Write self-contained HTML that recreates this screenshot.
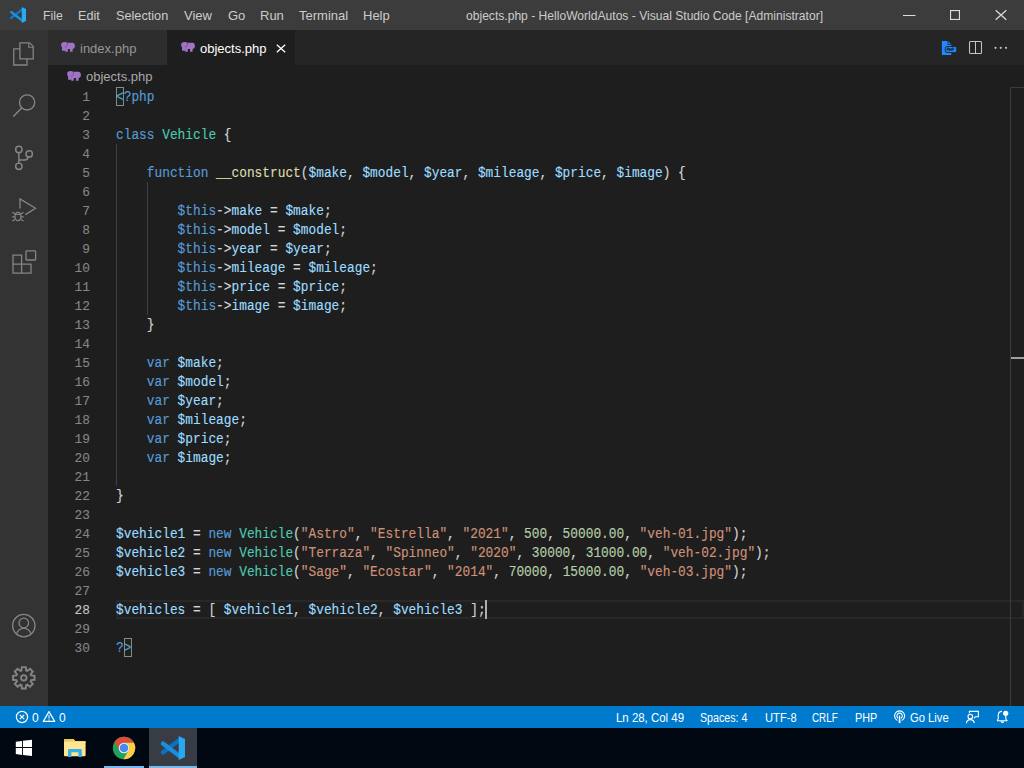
<!DOCTYPE html>
<html><head><meta charset="utf-8"><style>
*{margin:0;padding:0;box-sizing:border-box}
html,body{width:1024px;height:768px;overflow:hidden;background:#1e1e1e;font-family:"Liberation Sans",sans-serif}
.a{position:absolute;white-space:nowrap}
#title{position:absolute;left:0;top:0;width:1024px;height:30px;background:#3c3c3c}
.mi{position:absolute;top:8px;font-size:13px;line-height:15px;color:#cccccc;transform-origin:0 0}
#activity{position:absolute;left:0;top:30px;width:48px;height:676px;background:#333333}
#tabs{position:absolute;left:48px;top:30px;width:976px;height:35px;background:#252526}
.tab{position:absolute;top:0;height:35px}
#editor{position:absolute;left:48px;top:65px;width:976px;height:641px;background:#1e1e1e}
.ln{position:absolute;left:48px;width:42px;text-align:right;height:19px;line-height:20px;font-family:"Liberation Mono",monospace;font-size:13px;transform:scaleX(0.987);transform-origin:100% 0;-webkit-text-stroke:0.1px currentColor}
.cl{-webkit-text-stroke:0.15px currentColor;position:absolute;left:116px;height:19px;line-height:19px;font-family:"Liberation Mono",monospace;font-size:14px;transform:scaleX(0.91631);transform-origin:0 0;color:#d4d4d4;white-space:pre}
#status{position:absolute;left:0;top:706px;width:1024px;height:22px;background:#007acc}
.st{position:absolute;top:711px;font-size:12px;line-height:14px;color:#ffffff;transform-origin:0 0}
#taskbar{position:absolute;left:0;top:728px;width:1024px;height:40px;background:#020812}
svg{position:absolute;overflow:visible}
.tt{position:absolute;top:41px;font-size:13px;line-height:15px;transform-origin:0 0}
.bc{position:absolute;top:69px;font-size:13px;line-height:15px;color:#a9a9a9;transform-origin:0 0}

</style></head><body>
<div id="title">
  <svg style="left:10px;top:7px" width="16" height="16" viewBox="0 0 16 16">
      <path d="M1.2 11.0 L12.5 2.3" stroke="#0e78c8" stroke-width="2.4" stroke-linecap="round"/>
      <path d="M1.2 5.0 L12.5 13.7" stroke="#1c90dc" stroke-width="2.4" stroke-linecap="round"/>
      <path d="M11.8 0 L16 2 V14 L11.8 16 Z" fill="#2aa9f1"/>
    </svg>
  <div class="mi" style="left:43px;transform:scaleX(0.945)">File</div>
  <div class="mi" style="left:78px;transform:scaleX(0.97)">Edit</div>
  <div class="mi" style="left:116px;transform:scaleX(0.977)">Selection</div>
  <div class="mi" style="left:184px">View</div>
  <div class="mi" style="left:228px">Go</div>
  <div class="mi" style="left:260px">Run</div>
  <div class="mi" style="left:299px">Terminal</div>
  <div class="mi" style="left:363px">Help</div>
  <div class="mi" style="left:466px;transform:scaleX(0.93)">objects.php - HelloWorldAutos - Visual Studio Code [Administrator]</div>
  <svg style="left:903px;top:15px" width="13" height="1"><rect x="0" y="0" width="12.5" height="1" fill="#dcdcdc"/></svg>
  <svg style="left:950px;top:10px" width="10" height="10"><rect x="0.55" y="0.55" width="8.9" height="8.9" fill="none" stroke="#dcdcdc" stroke-width="1.1"/></svg>
  <svg style="left:995px;top:9px" width="12" height="12"><path d="M0.7 1.3 L11.3 10.7 M11.3 1.3 L0.7 10.7" stroke="#d8d8d8" stroke-width="1.3"/></svg>
</div>

<div id="activity">
  <svg style="left:0;top:0" width="48" height="676" viewBox="0 30 48 676" fill="none" stroke="#858585" stroke-width="1.3">
    <!-- explorer -->
    <path d="M19.9 48.8 H13.75 V65 H27 V58.8"/>
    <path d="M19.9 42.9 H29.7 L33.2 46.4 V58.8 H19.9 Z"/>
    <path d="M28.7 43.2 V47.3 H33" stroke-width="1.1"/>
    <!-- search -->
    <circle cx="27.1" cy="102.4" r="7.6"/>
    <path d="M21.6 107.9 L13.4 116.6" stroke-width="1.5"/>
    <!-- scm -->
    <g stroke-width="1.45">
    <circle cx="18.85" cy="149.5" r="3.2"/>
    <circle cx="29.2" cy="153.9" r="3.2"/>
    <circle cx="18.85" cy="166.3" r="3.2"/>
    <path d="M18.85 152.7 V163.1"/>
    <path d="M28.4 157 Q27.6 159.9 24.8 159.9 H18.85"/>
    </g>
    <!-- debug -->
    <path d="M20 208.6 V198.9 L35.5 208.2 L25.4 214.6"/>
    <ellipse cx="17.95" cy="216.4" rx="3" ry="4.2"/>
    <path d="M12.3 212.2 L15 213.8 M12.2 216.8 H14.9 M12.3 221 L15 219.4 M23.6 212.2 L20.9 213.8 M23.7 216.8 H21 M23.6 221 L20.9 219.4 M15 214.4 H20.9" stroke-width="1.2"/>
    <!-- extensions -->
    <path d="M13 255.2 H21.6 V273.2 H13 Z M13 264.2 H31 V273.2 H21.6" />
    <rect x="26" y="250.8" width="9.6" height="9.2" rx="0.8"/>
    <!-- accounts -->
    <circle cx="23.8" cy="625.6" r="11.2"/>
    <circle cx="23.8" cy="623" r="4.8"/>
    <path d="M16.4 634 Q18.5 628.3 23.8 628.3 Q29.1 628.3 31.2 634"/>
    <!-- settings -->
    <g transform="translate(23.8 677.8)">
      <path d="M-2.36 -7.33 L-1.99 -10.72 L1.99 -10.72 L2.36 -7.33 L3.51 -6.85 L6.17 -8.98 L8.98 -6.17 L6.85 -3.51 L7.33 -2.36 L10.72 -1.99 L10.72 1.99 L7.33 2.36 L6.85 3.51 L8.98 6.17 L6.17 8.98 L3.51 6.85 L2.36 7.33 L1.99 10.72 L-1.99 10.72 L-2.36 7.33 L-3.51 6.85 L-6.17 8.98 L-8.98 6.17 L-6.85 3.51 L-7.33 2.36 L-10.72 1.99 L-10.72 -1.99 L-7.33 -2.36 L-6.85 -3.51 L-8.98 -6.17 L-6.17 -8.98 L-3.51 -6.85 Z" stroke-width="1.9" stroke-linejoin="miter"/>
      <circle cx="0" cy="0" r="2.7" stroke-width="1.9"/>
    </g>
  </svg>
</div>

<div id="tabs">
  <div class="tab" style="left:0;width:120px;background:#2d2d2d"></div>
  <div class="tab" style="left:119px;width:128px;background:#1e1e1e"></div>
</div>
<svg class="elephant" style="left:61px;top:42px" width="14" height="10" viewBox="0 0 14 10">
      <ellipse cx="3.6" cy="3" rx="3.5" ry="2.9" fill="#a074c4"/>
      <path d="M6.2 0.7 H11.6 Q13.9 0.9 13.9 4.2 Q13.9 6.8 11.6 6.9 H4 Z" fill="#a074c4"/>
      <path d="M1.1 4.4 H4.4 V8.8 H1.6 Q1.1 8.8 1.1 8.3 Z" fill="#a074c4"/>
      <rect x="4.2" y="5.4" width="2.6" height="4.4" rx="0.4" fill="#a074c4"/>
      <rect x="9" y="5.4" width="2.6" height="4.4" rx="0.4" fill="#a074c4"/>
      <path d="M6.5 0.9 Q6.9 3.2 5.8 4.4 Q5 5.2 3.6 5" fill="none" stroke="#6d4a91" stroke-width="0.7"/>
    </svg>
<div class="tt" style="left:80px;color:#969696">index.php</div>
<svg style="left:181px;top:42px" width="14" height="10" viewBox="0 0 14 10">
      <ellipse cx="3.6" cy="3" rx="3.5" ry="2.9" fill="#a074c4"/>
      <path d="M6.2 0.7 H11.6 Q13.9 0.9 13.9 4.2 Q13.9 6.8 11.6 6.9 H4 Z" fill="#a074c4"/>
      <path d="M1.1 4.4 H4.4 V8.8 H1.6 Q1.1 8.8 1.1 8.3 Z" fill="#a074c4"/>
      <rect x="4.2" y="5.4" width="2.6" height="4.4" rx="0.4" fill="#a074c4"/>
      <rect x="9" y="5.4" width="2.6" height="4.4" rx="0.4" fill="#a074c4"/>
      <path d="M6.5 0.9 Q6.9 3.2 5.8 4.4 Q5 5.2 3.6 5" fill="none" stroke="#6d4a91" stroke-width="0.7"/>
    </svg>
<div class="tt" style="left:200px;color:#ffffff">objects.php</div>
<svg style="left:276px;top:44px" width="10" height="9"><path d="M0.8 0.8 L9.2 8.2 M9.2 0.8 L0.8 8.2" stroke="#ffffff" stroke-width="1.3"/></svg>

<!-- tab actions -->
<svg style="left:938px;top:38px" width="22" height="20" viewBox="0 0 22 20">
  <path d="M3.9 3 H9.9 L13.3 6.4 V16.9 H3.9 Z" fill="#2089ff"/>
  <path d="M9.9 3 V6.5 H13.3" fill="none" stroke="#252526" stroke-width="0.8"/>
  <rect x="7.3" y="8.5" width="11.4" height="6" rx="1.6" fill="#2089ff" stroke="#252526" stroke-width="0.9"/>
  <path d="M9.2 13 V10 H10.8 V11.6 H9.2 M11.6 13 V10 M11.6 11.5 H13.1 M13.1 10 V13 M14 13 V10 H15.6 V11.6 H14" fill="none" stroke="#1c2533" stroke-width="0.85"/>
</svg>
<svg style="left:968px;top:40px" width="15" height="15"><rect x="1.5" y="1.5" width="12" height="12" rx="1" fill="none" stroke="#c5c5c5" stroke-width="1.05"/><path d="M7.5 2 V13" stroke="#c5c5c5" stroke-width="1.05"/></svg>
<svg style="left:993px;top:46px" width="15" height="4"><circle cx="2.5" cy="1.8" r="1.1" fill="#c5c5c5"/><circle cx="7.75" cy="1.8" r="1.1" fill="#c5c5c5"/><circle cx="13" cy="1.8" r="1.1" fill="#c5c5c5"/></svg>



<!-- breadcrumbs -->
<svg style="left:67px;top:71px" width="14" height="10" viewBox="0 0 14 10">
      <ellipse cx="3.6" cy="3" rx="3.5" ry="2.9" fill="#a074c4"/>
      <path d="M6.2 0.7 H11.6 Q13.9 0.9 13.9 4.2 Q13.9 6.8 11.6 6.9 H4 Z" fill="#a074c4"/>
      <path d="M1.1 4.4 H4.4 V8.8 H1.6 Q1.1 8.8 1.1 8.3 Z" fill="#a074c4"/>
      <rect x="4.2" y="5.4" width="2.6" height="4.4" rx="0.4" fill="#a074c4"/>
      <rect x="9" y="5.4" width="2.6" height="4.4" rx="0.4" fill="#a074c4"/>
      <path d="M6.5 0.9 Q6.9 3.2 5.8 4.4 Q5 5.2 3.6 5" fill="none" stroke="#6d4a91" stroke-width="0.7"/>
    </svg>
<div class="bc" style="left:86px">objects.php</div>

<!-- editor decorations -->
<div style="position:absolute;left:116px;top:600px;width:908px;height:19px;border:2px solid #282828"></div>
<div style="position:absolute;left:116px;top:144px;width:1px;height:342px;background:#404040"></div>
<div style="position:absolute;left:147px;top:182px;width:1px;height:133px;background:#404040"></div>
<div style="position:absolute;left:116px;top:87px;width:8px;height:19px;border:1px solid #888888;background:rgba(0,100,0,0.1)"></div>
<div style="position:absolute;left:124px;top:638px;width:8px;height:19px;border:1px solid #888888;background:rgba(0,100,0,0.1)"></div>
<div class="ln" style="top:88px;color:#858585">1</div>
<div class="cl" style="top:88px"><span style="color:#569cd6">&lt;?php</span></div>
<div class="ln" style="top:107px;color:#858585">2</div>
<div class="ln" style="top:126px;color:#858585">3</div>
<div class="cl" style="top:126px"><span style="color:#569cd6">class</span> <span style="color:#4ec9b0">Vehicle</span> {</div>
<div class="ln" style="top:145px;color:#858585">4</div>
<div class="ln" style="top:164px;color:#858585">5</div>
<div class="cl" style="top:164px">    <span style="color:#569cd6">function</span> <span style="color:#dcdcaa">__construct</span>(<span style="color:#9cdcfe">$make</span>, <span style="color:#9cdcfe">$model</span>, <span style="color:#9cdcfe">$year</span>, <span style="color:#9cdcfe">$mileage</span>, <span style="color:#9cdcfe">$price</span>, <span style="color:#9cdcfe">$image</span>) {</div>
<div class="ln" style="top:183px;color:#858585">6</div>
<div class="ln" style="top:202px;color:#858585">7</div>
<div class="cl" style="top:202px">        <span style="color:#569cd6">$this</span>-&gt;<span style="color:#9cdcfe">make</span> = <span style="color:#9cdcfe">$make</span>;</div>
<div class="ln" style="top:221px;color:#858585">8</div>
<div class="cl" style="top:221px">        <span style="color:#569cd6">$this</span>-&gt;<span style="color:#9cdcfe">model</span> = <span style="color:#9cdcfe">$model</span>;</div>
<div class="ln" style="top:240px;color:#858585">9</div>
<div class="cl" style="top:240px">        <span style="color:#569cd6">$this</span>-&gt;<span style="color:#9cdcfe">year</span> = <span style="color:#9cdcfe">$year</span>;</div>
<div class="ln" style="top:259px;color:#858585">10</div>
<div class="cl" style="top:259px">        <span style="color:#569cd6">$this</span>-&gt;<span style="color:#9cdcfe">mileage</span> = <span style="color:#9cdcfe">$mileage</span>;</div>
<div class="ln" style="top:278px;color:#858585">11</div>
<div class="cl" style="top:278px">        <span style="color:#569cd6">$this</span>-&gt;<span style="color:#9cdcfe">price</span> = <span style="color:#9cdcfe">$price</span>;</div>
<div class="ln" style="top:297px;color:#858585">12</div>
<div class="cl" style="top:297px">        <span style="color:#569cd6">$this</span>-&gt;<span style="color:#9cdcfe">image</span> = <span style="color:#9cdcfe">$image</span>;</div>
<div class="ln" style="top:316px;color:#858585">13</div>
<div class="cl" style="top:316px">    }</div>
<div class="ln" style="top:335px;color:#858585">14</div>
<div class="ln" style="top:354px;color:#858585">15</div>
<div class="cl" style="top:354px">    <span style="color:#569cd6">var</span> <span style="color:#9cdcfe">$make</span>;</div>
<div class="ln" style="top:373px;color:#858585">16</div>
<div class="cl" style="top:373px">    <span style="color:#569cd6">var</span> <span style="color:#9cdcfe">$model</span>;</div>
<div class="ln" style="top:392px;color:#858585">17</div>
<div class="cl" style="top:392px">    <span style="color:#569cd6">var</span> <span style="color:#9cdcfe">$year</span>;</div>
<div class="ln" style="top:411px;color:#858585">18</div>
<div class="cl" style="top:411px">    <span style="color:#569cd6">var</span> <span style="color:#9cdcfe">$mileage</span>;</div>
<div class="ln" style="top:430px;color:#858585">19</div>
<div class="cl" style="top:430px">    <span style="color:#569cd6">var</span> <span style="color:#9cdcfe">$price</span>;</div>
<div class="ln" style="top:449px;color:#858585">20</div>
<div class="cl" style="top:449px">    <span style="color:#569cd6">var</span> <span style="color:#9cdcfe">$image</span>;</div>
<div class="ln" style="top:468px;color:#858585">21</div>
<div class="ln" style="top:487px;color:#858585">22</div>
<div class="cl" style="top:487px">}</div>
<div class="ln" style="top:506px;color:#858585">23</div>
<div class="ln" style="top:525px;color:#858585">24</div>
<div class="cl" style="top:525px"><span style="color:#9cdcfe">$vehicle1</span> = <span style="color:#569cd6">new</span> <span style="color:#4ec9b0">Vehicle</span>(<span style="color:#ce9178">&quot;Astro&quot;</span>, <span style="color:#ce9178">&quot;Estrella&quot;</span>, <span style="color:#ce9178">&quot;2021&quot;</span>, <span style="color:#b5cea8">500</span>, <span style="color:#b5cea8">50000.00</span>, <span style="color:#ce9178">&quot;veh-01.jpg&quot;</span>);</div>
<div class="ln" style="top:544px;color:#858585">25</div>
<div class="cl" style="top:544px"><span style="color:#9cdcfe">$vehicle2</span> = <span style="color:#569cd6">new</span> <span style="color:#4ec9b0">Vehicle</span>(<span style="color:#ce9178">&quot;Terraza&quot;</span>, <span style="color:#ce9178">&quot;Spinneo&quot;</span>, <span style="color:#ce9178">&quot;2020&quot;</span>, <span style="color:#b5cea8">30000</span>, <span style="color:#b5cea8">31000.00</span>, <span style="color:#ce9178">&quot;veh-02.jpg&quot;</span>);</div>
<div class="ln" style="top:563px;color:#858585">26</div>
<div class="cl" style="top:563px"><span style="color:#9cdcfe">$vehicle3</span> = <span style="color:#569cd6">new</span> <span style="color:#4ec9b0">Vehicle</span>(<span style="color:#ce9178">&quot;Sage&quot;</span>, <span style="color:#ce9178">&quot;Ecostar&quot;</span>, <span style="color:#ce9178">&quot;2014&quot;</span>, <span style="color:#b5cea8">70000</span>, <span style="color:#b5cea8">15000.00</span>, <span style="color:#ce9178">&quot;veh-03.jpg&quot;</span>);</div>
<div class="ln" style="top:582px;color:#858585">27</div>
<div class="ln" style="top:601px;color:#c6c6c6">28</div>
<div class="cl" style="top:601px"><span style="color:#9cdcfe">$vehicles</span> = [ <span style="color:#9cdcfe">$vehicle1</span>, <span style="color:#9cdcfe">$vehicle2</span>, <span style="color:#9cdcfe">$vehicle3</span> ];</div>
<div class="ln" style="top:620px;color:#858585">29</div>
<div class="ln" style="top:639px;color:#858585">30</div>
<div class="cl" style="top:639px"><span style="color:#569cd6">?&gt;</span></div>
<div style="position:absolute;left:485px;top:600px;width:2px;height:19px;background:#aeafad"></div>

<!-- overview ruler -->
<div style="position:absolute;left:1010px;top:87px;width:1px;height:619px;background:#3c3c3c"></div>
<div style="position:absolute;left:1010px;top:87px;width:14px;height:1px;background:#3c3c3c"></div>
<div style="position:absolute;left:1011px;top:357px;width:13px;height:2px;background:#a0a0a0"></div>

<div id="status"></div>
<svg style="left:15px;top:710px" width="14" height="14" viewBox="0 0 14 14" fill="none" stroke="#fff" stroke-width="1.2"><circle cx="7" cy="7" r="5.6"/><path d="M4.8 4.8 L9.2 9.2 M9.2 4.8 L4.8 9.2"/></svg>
<div class="st" style="left:32px">0</div>
<svg style="left:42px;top:710px" width="14" height="13" viewBox="0 0 14 13" fill="none" stroke="#fff" stroke-width="1.2" stroke-linejoin="round"><path d="M7 1.6 L12.7 11.4 H1.3 Z"/><path d="M7 5 V8.6 M7 9.4 V10.6" stroke-width="1"/></svg>
<div class="st" style="left:59px">0</div>
<div class="st" style="left:616px;transform:scaleX(0.953)">Ln 28, Col 49</div>
<div class="st" style="left:700px;transform:scaleX(0.89)">Spaces: 4</div>
<div class="st" style="left:765px;transform:scaleX(0.93)">UTF-8</div>
<div class="st" style="left:812px;transform:scaleX(0.82)">CRLF</div>
<div class="st" style="left:855px;transform:scaleX(0.9)">PHP</div>
<svg style="left:893px;top:709px" width="14" height="15" viewBox="0 0 14 15" fill="none" stroke="#fff" stroke-width="1.1"><path d="M4.49 11.38 A5 5 0 1 1 8.71 11.38"/><path d="M5.25 9.19 A2.7 2.7 0 1 1 7.95 9.19"/><path d="M6.1 6.6 H7.1 L7.6 14 H5.6 Z" fill="#fff" stroke="none"/></svg>
<div class="st" style="left:910px;transform:scaleX(0.936)">Go Live</div>
<svg style="left:962px;top:707px" width="20" height="20" viewBox="0 0 20 20" fill="none" stroke="#fff" stroke-width="1.1"><path d="M7.4 6.2 V4.4 H16.4 V9.8 H13.4 L11.8 11.4"/><circle cx="8.3" cy="9.6" r="2.3"/><path d="M4.4 16.2 Q4.8 12.6 8.3 12.6 Q11.8 12.6 12.3 16.2"/></svg>
<svg style="left:994px;top:707px" width="20" height="20" viewBox="0 0 20 20" fill="none" stroke="#fff" stroke-width="1.1"><path d="M3.1 13.8 Q4.2 13 4.2 11.6 V8.4 Q4.2 4.5 8 4.4"/><path d="M11.8 9 V11.6 Q11.8 13 13.4 13.8 H3.1"/><path d="M7 14.4 Q8.4 16.4 9.8 14.4"/><circle cx="11.7" cy="6.35" r="2.6" fill="#fff" stroke="none"/></svg>

<div id="taskbar"></div>
<!-- windows logo -->
<svg style="left:15px;top:739px" width="18" height="18" viewBox="0 0 18 18" fill="#ffffff"><path d="M0.8 2.8 L7 1.9 V7.9 H0.8 Z M7.9 1.8 L17 0.8 V7.9 H7.9 Z M0.8 9 H7 V16 L0.8 14.9 Z M7.9 9 H17 V17 L7.9 16.1 Z"/></svg>
<!-- folder -->
<svg style="left:64px;top:739px" width="22" height="19" viewBox="0 0 22 19">
  <path d="M0 1.2 Q0 0 1.2 0 H8.8 Q9.6 0 10.2 0.8 L11.2 2 H21.6 V4 H0 Z" fill="#f5c949"/>
  <path d="M0 2.6 H20.6 Q21.6 2.6 21.6 3.6 V16.2 Q21.6 17.2 20.6 17.2 H1 Q0 17.2 0 16.2 Z" fill="#ffe58f"/>
  <path d="M0 1.2 Q0 0 1.2 0 H8.8 Q9.6 0 10.2 0.8 L11.2 2.2 H0 Z" fill="#f6cb4c"/>
  <rect x="1.6" y="0.9" width="4.8" height="1.1" rx="0.5" fill="#9fd2c0"/>
  <path d="M4 18 V11.2 Q4 10 5.2 10 H16.6 Q17.8 10 17.8 11.2 V18 H14.4 V13.3 H7.4 V18 Z" fill="#35b0ee"/>
</svg>
<!-- chrome -->
<svg style="left:112px;top:736px" width="24" height="24" viewBox="0 0 24 24">
  <circle cx="12" cy="12" r="11.2" fill="#1ea35e"/>
  <path d="M2.54 6.01 A11.2 11.2 0 0 1 21.92 6.8 L12 6.8 A5.2 5.2 0 0 0 7.5 14.6 Z" fill="#df4b3b"/>
  <path d="M21.92 6.8 A11.2 11.2 0 0 1 11.54 23.19 L16.5 14.6 A5.2 5.2 0 0 0 12 6.8 Z" fill="#fecd41"/>
  <circle cx="12" cy="12" r="5.3" fill="#f2f2f2"/>
  <circle cx="12" cy="12" r="4.3" fill="#4a89f3"/>
</svg>
<div style="position:absolute;left:104px;top:766px;width:40px;height:2px;background:#76b9ed"></div>
<div style="position:absolute;left:149px;top:728px;width:48px;height:40px;background:#383c44"></div>
<div style="position:absolute;left:149px;top:766px;width:48px;height:2px;background:#76b9ed"></div>
<svg style="left:161px;top:736px" width="24" height="24" viewBox="0 0 16 16">
      <path d="M1.3 11.0 L12.5 2.5" stroke="#0b70be" stroke-width="2.9" stroke-linecap="round"/>
      <path d="M1.3 5.0 L12.5 13.5" stroke="#1a8edc" stroke-width="2.9" stroke-linecap="round"/>
      <path d="M11.8 0 L16 2 V14 L11.8 16 Z" fill="#29a9f1"/>
    </svg>

</body></html>
